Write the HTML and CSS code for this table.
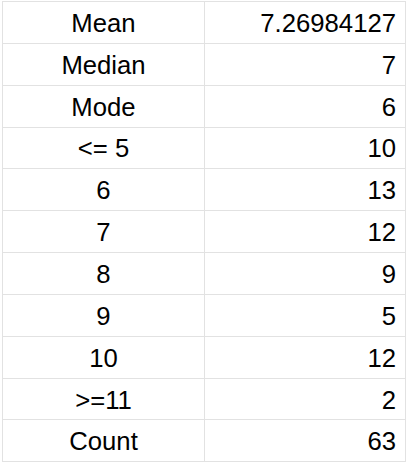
FILE: index.html
```html
<!DOCTYPE html>
<html>
<head>
<meta charset="utf-8">
<link rel="stylesheet" href="styles.css">
</head>
<body>
<div class="sheet">
  <div class="cell label">Mean</div><div class="cell value">7.26984127</div>
  <div class="cell label">Median</div><div class="cell value">7</div>
  <div class="cell label">Mode</div><div class="cell value">6</div>
  <div class="cell label">&lt;= 5</div><div class="cell value">10</div>
  <div class="cell label">6</div><div class="cell value">13</div>
  <div class="cell label">7</div><div class="cell value">12</div>
  <div class="cell label">8</div><div class="cell value">9</div>
  <div class="cell label">9</div><div class="cell value">5</div>
  <div class="cell label">10</div><div class="cell value">12</div>
  <div class="cell label">&gt;=11</div><div class="cell value">2</div>
  <div class="cell label">Count</div><div class="cell value">63</div>
</div>
</body>
</html>
```
FILE: styles.css
```css
html, body {
  margin: 0;
  padding: 0;
  background: #ffffff;
}
body {
  font-family: "Liberation Sans", Arial, sans-serif;
  color: #000000;
}
.sheet {
  margin: 1px 0 0 2px;
  display: grid;
  grid-template-columns: 202px 201px;
  grid-auto-rows: 41.85px;
  width: 403px;
  border-top: 1px solid #e2e2e2;
  border-left: 1px solid #e2e2e2;
}
.cell {
  box-sizing: border-box;
  border-right: 1px solid #e2e2e2;
  border-bottom: 1px solid #e2e2e2;
  display: flex;
  align-items: center;
  font-size: 25.7px;
  padding: 2px 9px 0 9px;
  white-space: nowrap;
}
.label {
  justify-content: center;
}
.value {
  justify-content: flex-end;
}
```
